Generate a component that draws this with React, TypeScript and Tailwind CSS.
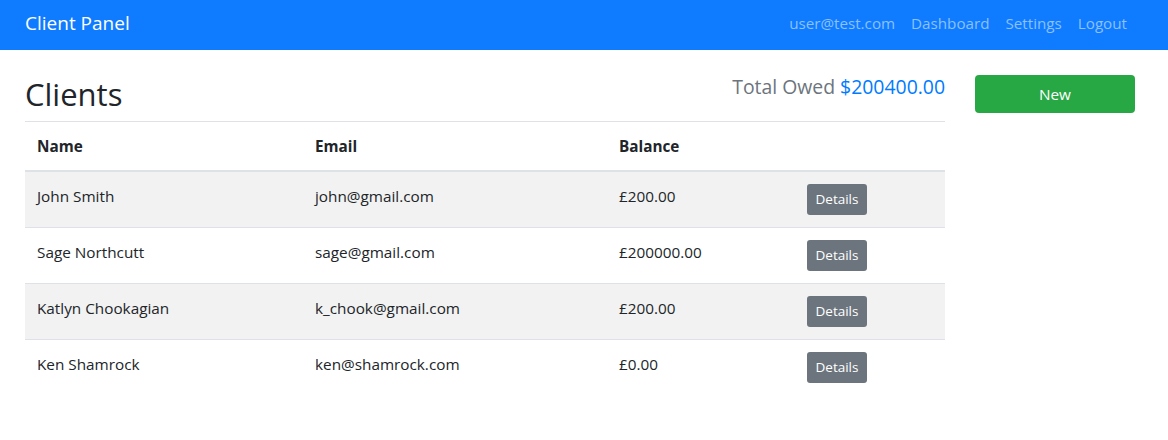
import React from "react";

interface Client {
  name: string;
  email: string;
  balance: string;
}

const CLIENTS: Client[] = [
  { name: "John Smith", email: "john@gmail.com", balance: "£200.00" },
  { name: "Sage Northcutt", email: "sage@gmail.com", balance: "£200000.00" },
  { name: "Katlyn Chookagian", email: "k_chook@gmail.com", balance: "£200.00" },
  { name: "Ken Shamrock", email: "ken@shamrock.com", balance: "£0.00" },
];

const NAV_LINKS = ["user@test.com", "Dashboard", "Settings", "Logout"];

const App: React.FC = () => {
  return (
    <div className="min-h-[440px] bg-white text-[#212529] font-['Open_Sans',sans-serif] text-[15.3px]">
      <nav className="h-[50px] bg-[#0f7bff] flex items-center justify-between pl-[25px] pr-[33px] pb-1">
        <span className="text-white text-[19px] leading-[30px]">Client Panel</span>
        <ul className="flex">
          {NAV_LINKS.map((link) => (
            <li key={link} className="px-2 text-[#8cc0ff] text-[15.2px] leading-6">
              {link}
            </li>
          ))}
        </ul>
      </nav>

      <main className="flex gap-[30px] pl-[25px] pr-[33px] pt-[25px]">
        <div className="w-[920px]">
          <div className="flex items-start justify-between">
            <h2 className="text-[31px] leading-[38px] mb-2 font-medium">Clients</h2>
            <h5 className="text-[19.4px] leading-6 font-medium text-[#6c757d]">
              Total Owed <span className="text-[#007bff]">$200400.00</span>
            </h5>
          </div>
          <table className="w-full border-collapse text-left">
            <thead>
              <tr className="border-t border-[#dee2e6] border-b-2">
                <th className="w-[278px] p-3 font-bold leading-6">Name</th>
                <th className="w-[304px] p-3 font-bold leading-6">Email</th>
                <th className="w-[188px] p-3 font-bold leading-6">Balance</th>
                <th className="p-3"></th>
              </tr>
            </thead>
            <tbody>
              {CLIENTS.map((c, i) => (
                <tr
                  key={c.email}
                  className={`border-t border-[#dee2e6] ${i % 2 === 0 ? "bg-[#f2f2f2]" : "bg-white"}`}
                >
                  <td className="p-3 align-top leading-6">{c.name}</td>
                  <td className="p-3 align-top leading-6">{c.email}</td>
                  <td className="p-3 align-top leading-6">{c.balance}</td>
                  <td className="p-3 align-top">
                    <button className="h-[31px] w-[60px] rounded-[3px] bg-[#6c757d] text-white text-[13.5px]">
                      Details
                    </button>
                  </td>
                </tr>
              ))}
            </tbody>
          </table>
        </div>

        <div className="w-[160px]">
          <button className="w-full h-[38px] rounded bg-[#28a745] text-white text-[15.3px]">New</button>
        </div>
      </main>
    </div>
  );
};

export default App;
